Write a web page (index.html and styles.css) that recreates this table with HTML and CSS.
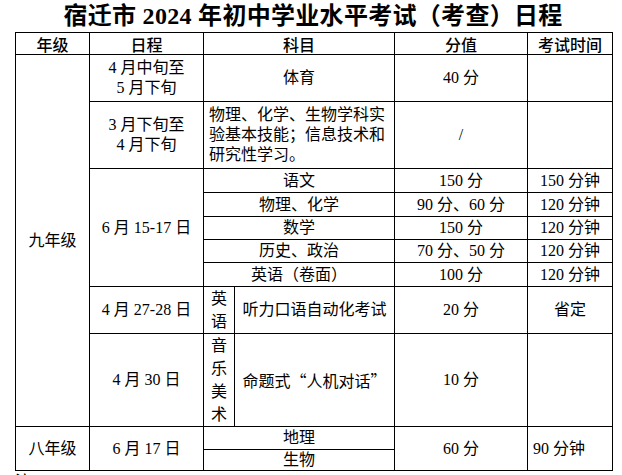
FILE: index.html
```html
<!DOCTYPE html>
<html lang="zh-CN">
<head>
<meta charset="utf-8">
<title>宿迁市2024年初中学业水平考试（考查）日程</title>
<link rel="stylesheet" href="styles.css">
</head>
<body>
<div class="page">
  <h1 class="title">宿迁市 2024 年初中学业水平考试（考查）日程</h1>
  <table class="sched">
    <colgroup>
      <col class="c-grade">
      <col class="c-date">
      <col class="c-sub1">
      <col class="c-sub2">
      <col class="c-score">
      <col class="c-time">
    </colgroup>
    <thead>
      <tr class="r-head">
        <th>年级</th>
        <th>日程</th>
        <th colspan="2">科目</th>
        <th>分值</th>
        <th>考试时间</th>
      </tr>
    </thead>
    <tbody>
      <tr class="r-47">
        <td rowspan="9">九年级</td>
        <td>4 月中旬至<br>5 月下旬</td>
        <td colspan="2">体育</td>
        <td>40 分</td>
        <td></td>
      </tr>
      <tr class="r-67">
        <td>3 月下旬至<br>4 月下旬</td>
        <td colspan="2" class="left">物理、化学、生物学科实验基本技能；信息技术和研究性学习。</td>
        <td>/</td>
        <td></td>
      </tr>
      <tr class="r-24">
        <td rowspan="5">6 月 15-17 日</td>
        <td colspan="2">语文</td>
        <td>150 分</td>
        <td>150 分钟</td>
      </tr>
      <tr class="r-24">
        <td colspan="2">物理、化学</td>
        <td>90 分、60 分</td>
        <td>120 分钟</td>
      </tr>
      <tr class="r-23">
        <td colspan="2">数学</td>
        <td>150 分</td>
        <td>120 分钟</td>
      </tr>
      <tr class="r-23">
        <td colspan="2">历史、政治</td>
        <td>70 分、50 分</td>
        <td>120 分钟</td>
      </tr>
      <tr class="r-24">
        <td colspan="2">英语（卷面）</td>
        <td>100 分</td>
        <td>120 分钟</td>
      </tr>
      <tr class="r-45">
        <td>4 月 27-28 日</td>
        <td class="vert">英<br>语</td>
        <td>听力口语自动化考试</td>
        <td>20 分</td>
        <td>省定</td>
      </tr>
      <tr class="r-92">
        <td>4 月 30 日</td>
        <td class="vert">音<br>乐<br>美<br>术</td>
        <td class="cjk">命题式“人机对话”</td>
        <td>10 分</td>
        <td></td>
      </tr>
      <tr class="r-23">
        <td rowspan="2">八年级</td>
        <td rowspan="2">6 月 17 日</td>
        <td colspan="2">地理</td>
        <td rowspan="2">60 分</td>
        <td rowspan="2" class="left">90 分钟</td>
      </tr>
      <tr class="r-21">
        <td colspan="2">生物</td>
      </tr>
    </tbody>
  </table>
  <p class="note">注：</p>
</div>
</body>
</html>
```

FILE: styles.css
```css
html, body {
  margin: 0;
  padding: 0;
  background: #fff;
  color: #000;
}

.page {
  width: 622px;
  padding-left: 15px;
  box-sizing: border-box;
  font-family: "Liberation Serif", "Noto Sans CJK SC", serif;
  font-size: 16px;
}

.title {
  margin: 0;
  width: 596px;
  height: 32px;
  line-height: 32px;
  text-align: center;
  font-size: 24px;
  font-weight: bold;
  font-family: "Liberation Serif", "Noto Sans CJK SC", serif;
  letter-spacing: 0.3px;
}

.sched {
  width: 597px;
  border-collapse: collapse;
  table-layout: fixed;
}

.c-grade { width: 74px; }
.c-date { width: 114px; }
.c-sub1 { width: 31px; }
.c-sub2 { width: 160px; }
.c-score { width: 133px; }
.c-time { width: 85px; }

.sched th,
.sched td {
  border: 1px solid #000;
  padding: 0;
  text-align: center;
  vertical-align: middle;
  line-height: 20px;
  font-weight: normal;
}

.sched th {
  font-family: "Noto Sans CJK SC", sans-serif;
  font-weight: 500;
}

.sched td.left {
  text-align: left;
  padding-left: 5px;
  padding-right: 4px;
}

.sched td.vert {
  line-height: 23px;
}

.sched td.cjk {
  font-family: "Noto Sans CJK SC", sans-serif;
}

.r-head { height: 22px; }
.r-47 { height: 47px; }
.r-67 { height: 67px; }
.r-24 { height: 24px; }
.r-23 { height: 23px; }
.r-45 { height: 45px; }
.r-92 { height: 92px; }
.r-21 { height: 21px; }

.note {
  margin: 3px 0 0 0;
  line-height: 16px;
}
```
